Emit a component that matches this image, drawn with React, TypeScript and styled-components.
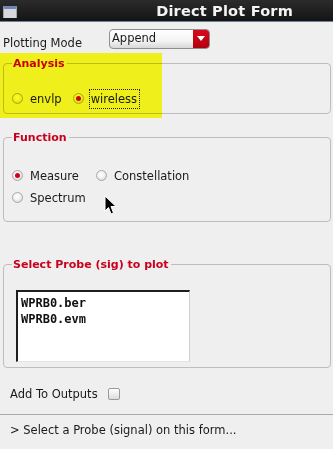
import React from "react";
import styled, { createGlobalStyle } from "styled-components";

const GlobalStyle = createGlobalStyle`
  html, body {
    margin: 0;
    padding: 0;
    background: #efefef;
  }
  body {
    font-family: "DejaVu Sans", Verdana, sans-serif;
    font-size: 11px;
    color: #1a1a1a;
  }
`;

const Window = styled.div`
  position: relative;
  width: 333px;
  height: 449px;
  overflow: hidden;
  background: #efefef;
`;

const TitleBar = styled.div`
  display: flex;
  align-items: center;
  height: 22px;
  background: linear-gradient(#2b2b2b, #141414);
  border-bottom: 1px solid #6d8299;
  box-sizing: border-box;
`;

const WinIcon = styled.div`
  width: 14px;
  height: 12px;
  margin: 3px 0 0 3px;
  box-sizing: border-box;
  background: #d8d8dc;
  border-top: 3px solid #6f86b8;
  border-left: 1px solid #9aa;
  border-right: 1px solid #9aa;
`;

const Title = styled.div`
  flex: 1;
  text-align: right;
  padding-right: 40px;
  color: #f4f4f4;
  font-weight: bold;
  font-size: 14.5px;
  letter-spacing: 0.2px;
`;

const Body = styled.div`
  padding: 0 2px 0 3px;
`;

const ModeRow = styled.div`
  display: flex;
  align-items: center;
  margin-top: 6px;
  height: 21px;
`;

const ModeLabel = styled.span`
  width: 106px;
  padding-top: 9px;
  font-size: 11.5px;
`;

const Select = styled.div`
  display: flex;
  width: 101px;
  height: 20px;
  box-sizing: border-box;
  border: 1px solid #8e8e8e;
  border-radius: 4px;
  overflow: hidden;
  background: linear-gradient(#ffffff, #f4f4f4 60%, #d8d8d8);
`;

const SelectText = styled.span`
  flex: 1;
  padding-left: 2px;
  line-height: 17px;
  font-size: 11.5px;
`;

const SelectButton = styled.span`
  width: 16px;
  display: flex;
  align-items: center;
  justify-content: center;
  background: linear-gradient(#d80a1c, #b00010);
  &::after {
    content: "";
    border-left: 4px solid transparent;
    border-right: 4px solid transparent;
    border-top: 5px solid #fff;
  }
`;

const Group = styled.fieldset<{ $top: number; $bottom: number }>`
  margin: ${(p) => p.$top}px 0 0 0;
  width: 328px;
  box-sizing: border-box;
  border: 1px solid #bdbdbd;
  border-radius: 4px;
  padding: 0 8px ${(p) => p.$bottom}px 8px;
  min-width: 0;
`;

const Legend = styled.legend`
  padding: 0 2px 0 1px;
  margin-left: 0;
  color: #c8001c;
  font-weight: bold;
  font-size: 11px;
  line-height: 13px;
`;

const RadioRow = styled.div<{ $gap: number; $top: number }>`
  display: flex;
  align-items: center;
  gap: ${(p) => p.$gap}px;
  margin-top: ${(p) => p.$top}px;
  height: 21px;
`;

const Option = styled.label<{ $focus?: boolean; $width?: number }>`
  display: flex;
  align-items: center;
  gap: 5px;
  width: ${(p) => (p.$width ? `${p.$width}px` : "auto")};
  span {
    padding: 2px 2px 2px 1px;
    border: 1px ${(p) => (p.$focus ? "dotted #222" : "solid transparent")};
    font-size: 11.5px;
  }
`;

const Radio = styled.i<{ $on?: boolean }>`
  display: block;
  width: 11px;
  height: 11px;
  border-radius: 50%;
  box-sizing: border-box;
  border: 1px solid #a8a8a8;
  background: radial-gradient(circle at 45% 40%, #ffffff 0%, #f2f2f2 45%, #c8c8c8 100%);
  position: relative;
  &::after {
    content: "";
    display: ${(p) => (p.$on ? "block" : "none")};
    position: absolute;
    left: 2px;
    top: 2px;
    width: 5px;
    height: 5px;
    border-radius: 50%;
    background: #d4001a;
  }
`;

const ListBox = styled.div`
  width: 174px;
  height: 72px;
  margin: 19px 0 0 4px;
  box-sizing: border-box;
  background: #fff;
  border-top: 2px solid #1e1e1e;
  border-left: 2px solid #1e1e1e;
  border-right: 1px solid #d0d0d0;
  border-bottom: 1px solid #e4e4e4;
  padding: 3px 0 0 3px;
  font-family: "DejaVu Sans Mono", monospace;
  font-weight: bold;
  font-size: 12px;
  line-height: 16px;
  color: #111;
`;

const OutputsRow = styled.div`
  display: flex;
  align-items: center;
  gap: 10px;
  margin: 16px 0 0 7px;
  height: 20px;
  font-size: 11.5px;
`;

const CheckBox = styled.i`
  display: block;
  width: 12px;
  height: 12px;
  box-sizing: border-box;
  border: 1px solid #9a9a9a;
  border-radius: 2px;
  background: linear-gradient(#ffffff, #dcdcdc);
`;

const Separator = styled.div`
  height: 1px;
  background: #a9a9a9;
  margin-top: 10px;
`;

const Status = styled.div`
  padding: 8px 0 0 10px;
  font-size: 11.5px;
`;

const Highlight = styled.div`
  position: absolute;
  left: 0;
  top: 53px;
  width: 162px;
  height: 65px;
  background: #ffff1c;
  mix-blend-mode: multiply;
  pointer-events: none;
`;

const Cursor = styled.svg`
  position: absolute;
  left: 104px;
  top: 195px;
`;

export default function App() {
  return (
    <>
      <GlobalStyle />
      <Window>
        <TitleBar>
          <WinIcon />
          <Title>Direct Plot Form</Title>
        </TitleBar>
        <Body>
          <ModeRow>
            <ModeLabel>Plotting Mode</ModeLabel>
            <Select>
              <SelectText>Append</SelectText>
              <SelectButton />
            </Select>
          </ModeRow>

          <Group $top={8} $bottom={4}>
            <Legend>Analysis</Legend>
            <RadioRow $gap={8} $top={18}>
              <Option>
                <Radio />
                <span>envlp</span>
              </Option>
              <Option $focus>
                <Radio $on />
                <span>wireless</span>
              </Option>
            </RadioRow>
          </Group>

          <Group $top={17} $bottom={13}>
            <Legend>Function</Legend>
            <RadioRow $gap={0} $top={21}>
              <Option $width={84}>
                <Radio $on />
                <span>Measure</span>
              </Option>
              <Option>
                <Radio />
                <span>Constellation</span>
              </Option>
            </RadioRow>
            <RadioRow $gap={0} $top={1}>
              <Option>
                <Radio />
                <span>Spectrum</span>
              </Option>
            </RadioRow>
          </Group>

          <Group $top={36} $bottom={5}>
            <Legend>Select Probe (sig) to plot</Legend>
            <ListBox>
              <div>WPRB0.ber</div>
              <div>WPRB0.evm</div>
            </ListBox>
          </Group>

          <OutputsRow>
            <span>Add To Outputs</span>
            <CheckBox />
          </OutputsRow>
        </Body>
        <Separator />
        <Status>&gt; Select a Probe (signal) on this form...</Status>

        <Highlight />
        <Cursor width="13" height="21" viewBox="0 0 13 21">
          <path
            d="M1 1 L1 16 L4.5 12.5 L7 19 L9.5 18 L7 11.5 L12 11.5 Z"
            fill="#000"
            stroke="#fff"
            strokeWidth="1"
          />
        </Cursor>
      </Window>
    </>
  );
}
